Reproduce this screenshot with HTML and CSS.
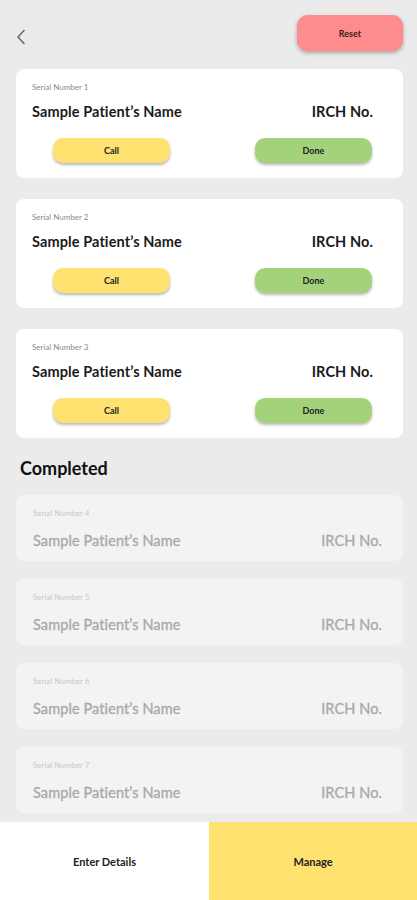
FILE: index.html
```html
<!DOCTYPE html>
<html>
<head>
<meta charset="utf-8">
<link rel="stylesheet" href="styles.css">
</head>
<body>
<div class="app">
  <div class="topbar">
    <svg class="back" width="10" height="16" viewBox="0 0 10 16"><path d="M8 1.5 L2 8 L8 14.5" fill="none" stroke="#6b6b6b" stroke-width="1.6" stroke-linecap="round" stroke-linejoin="round"/></svg>
    <button class="reset">Reset</button>
  </div>

  <div class="list">
    <div class="card">
      <div class="serial">Serial Number 1</div>
      <div class="row"><span class="name">Sample Patient’s Name</span><span class="irch">IRCH No.</span></div>
      <div class="actions"><button class="btn call">Call</button><button class="btn done">Done</button></div>
    </div>
    <div class="card">
      <div class="serial">Serial Number 2</div>
      <div class="row"><span class="name">Sample Patient’s Name</span><span class="irch">IRCH No.</span></div>
      <div class="actions"><button class="btn call">Call</button><button class="btn done">Done</button></div>
    </div>
    <div class="card">
      <div class="serial">Serial Number 3</div>
      <div class="row"><span class="name">Sample Patient’s Name</span><span class="irch">IRCH No.</span></div>
      <div class="actions"><button class="btn call">Call</button><button class="btn done">Done</button></div>
    </div>
  </div>

  <h2 class="section">Completed</h2>

  <div class="list completed">
    <div class="card muted">
      <div class="serial">Serial Number 4</div>
      <div class="row"><span class="name">Sample Patient’s Name</span><span class="irch">IRCH No.</span></div>
    </div>
    <div class="card muted">
      <div class="serial">Serial Number 5</div>
      <div class="row"><span class="name">Sample Patient’s Name</span><span class="irch">IRCH No.</span></div>
    </div>
    <div class="card muted">
      <div class="serial">Serial Number 6</div>
      <div class="row"><span class="name">Sample Patient’s Name</span><span class="irch">IRCH No.</span></div>
    </div>
    <div class="card muted">
      <div class="serial">Serial Number 7</div>
      <div class="row"><span class="name">Sample Patient’s Name</span><span class="irch">IRCH No.</span></div>
    </div>
  </div>
</div>

<nav class="tabbar">
  <div class="tab">Enter Details</div>
  <div class="tab active">Manage</div>
</nav>
</body>
</html>
```

FILE: styles.css
```css
* { box-sizing: border-box; }
html, body {
  margin: 0;
  padding: 0;
  background: #ebebeb;
  font-family: Lato, "Noto Sans", sans-serif;
  color: #111;
}
.app {
  height: 822px;
  overflow: hidden;
  padding: 15px 14px 0 16px;
}
.topbar {
  display: flex;
  justify-content: space-between;
  align-items: center;
  height: 36px;
}
.back { margin-left: 0; margin-top: 8px; }
.reset {
  width: 106px;
  height: 36px;
  border: none;
  border-radius: 11px;
  background: #ff8c8c;
  font-family: inherit;
  font-size: 9px;
  font-weight: 700;
  color: #3a1a1a;
  box-shadow: 0 2px 4px rgba(0,0,0,0.3);
}
.list {
  display: flex;
  flex-direction: column;
  gap: 21px;
  margin-top: 18px;
}
.card {
  background: #fff;
  border-radius: 8px;
  padding: 12px 30px 15px 16px;
  height: 109px;
}
.serial {
  font-size: 8px;
  color: #8a8a8a;
  line-height: 12px;
}
.row {
  display: flex;
  justify-content: space-between;
  align-items: center;
  margin-top: 8px;
  height: 20px;
}
.name, .irch {
  font-size: 14.5px;
  font-weight: 700;
  color: #1a1a1a;
  letter-spacing: 0.1px;
}
.actions {
  display: flex;
  justify-content: space-between;
  margin-top: 17px;
  padding-left: 21px;
  padding-right: 1px;
}
.btn {
  width: 117px;
  height: 25px;
  border: none;
  border-radius: 10px;
  font-family: inherit;
  font-size: 9px;
  font-weight: 700;
  color: #222;
  box-shadow: 0 2px 3px rgba(0,0,0,0.28);
}
.call { background: #ffe170; }
.done { background: #a4d27a; }
.section {
  font-size: 18px;
  font-weight: 700;
  margin: 18px 0 0 4px;
  line-height: 24px;
  color: #111;
}
.completed {
  margin-top: 15px;
  gap: 18px;
}
.card.muted {
  background: #f3f3f3;
  height: 66px;
  padding: 12px 21px 0 17px;
}
.muted .serial { color: #c8c8c8; }
.muted .row { margin-top: 11px; }
.muted .name, .muted .irch {
  color: #a8a8a8;
  font-weight: 400;
  -webkit-text-stroke: 0.3px #a8a8a8;
}
.tabbar {
  display: flex;
  height: 78px;
}
.tab {
  flex: 1;
  background: #fff;
  display: flex;
  align-items: center;
  justify-content: center;
  font-size: 11px;
  font-weight: 700;
  color: #222;
}
.tab.active {
  background: #ffe170;
  flex: 0 0 208px;
}
```
